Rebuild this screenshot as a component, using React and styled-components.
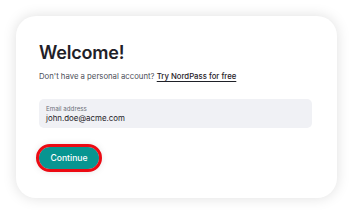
import React from "react";
import styled, { createGlobalStyle } from "styled-components";

const Global = createGlobalStyle`
  html, body { margin: 0; padding: 0; background: #ffffff; }
  body { font-family: Inter, "Noto Sans", sans-serif; }
`;

const Page = styled.div`
  width: 353px;
  height: 215px;
  box-sizing: border-box;
  padding: 16px;
`;

const Card = styled.div`
  width: 321px;
  height: 182px;
  box-sizing: border-box;
  border-radius: 20px;
  background: #ffffff;
  box-shadow: 0 0 14px rgba(0, 0, 0, 0.13);
  padding: 26px 25px 0 23px;
  display: flex;
  flex-direction: column;
`;

const Title = styled.h1`
  margin: 0;
  font-size: 18px;
  line-height: 22px;
  font-weight: 600;
  color: #1f2128;
  letter-spacing: -0.2px;
`;

const Sub = styled.p`
  margin: 7px 0 0;
  font-size: 7.75px;
  line-height: 11px;
  color: #4a4d57;
`;

const Link = styled.a`
  color: #1f2128;
  font-weight: 500;
  text-decoration: underline;
  text-underline-offset: 2px;
`;

const Field = styled.div`
  margin-top: 17px;
  height: 29px;
  box-sizing: border-box;
  border-radius: 5px;
  background: #f0f1f5;
  padding: 5px 7px 0;
  display: flex;
  flex-direction: column;
`;

const Label = styled.span`
  font-size: 6.2px;
  line-height: 9px;
  color: #6b6e78;
`;

const Value = styled.span`
  font-size: 7.9px;
  line-height: 11px;
  color: #1f2128;
`;

const Button = styled.button`
  margin-top: 19px;
  align-self: flex-start;
  width: 60px;
  height: 22px;
  border-radius: 11px;
  border: none;
  background: #079591;
  color: #ffffff;
  font-family: Inter, "Noto Sans", sans-serif;
  font-size: 8.6px;
  font-weight: 500;
  padding: 0;
  outline: 3px solid #ec0a13;
  outline-offset: 0;
  box-shadow: 0 0 8px rgba(0, 0, 0, 0.25);
`;

export default function App() {
  return (
    <>
      <Global />
      <Page>
        <Card>
          <Title>Welcome!</Title>
          <Sub>
            Don't have a personal account? <Link>Try NordPass for free</Link>
          </Sub>
          <Field>
            <Label>Email address</Label>
            <Value>john.doe@acme.com</Value>
          </Field>
          <Button>Continue</Button>
        </Card>
      </Page>
    </>
  );
}
